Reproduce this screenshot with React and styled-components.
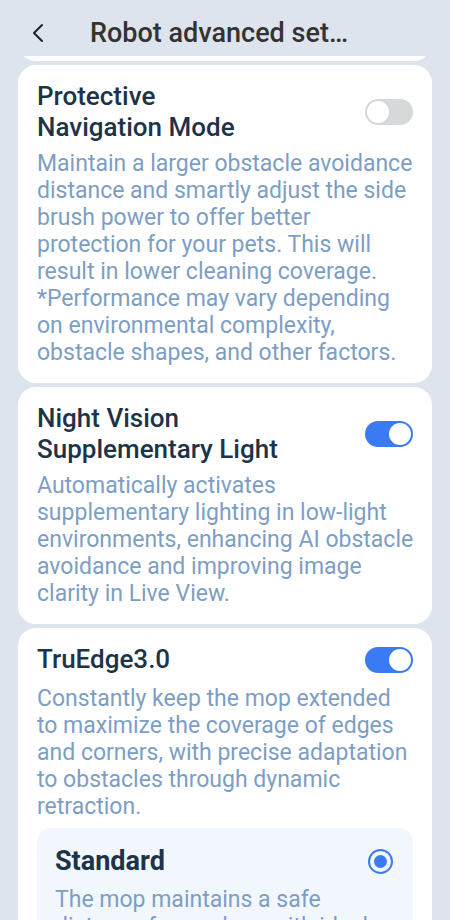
import React, { useState } from 'react';
import styled, { createGlobalStyle } from 'styled-components';

const GlobalStyle = createGlobalStyle`
  * { box-sizing: border-box; }
  html, body {
    margin: 0;
    padding: 0;
    background: #dde4ee;
    font-family: Roboto, "Noto Sans", "Liberation Sans", sans-serif;
    -webkit-font-smoothing: antialiased;
  }
`;

const Screen = styled.div`
  width: 450px;
  height: 920px;
  overflow: hidden;
  background: #dde4ee;
  display: flex;
  flex-direction: column;
`;

const Header = styled.div`
  height: 56px;
  display: flex;
  align-items: center;
  padding: 9px 0 0 28px;
  flex-shrink: 0;
`;

const BackButton = styled.button`
  width: 20px;
  height: 24px;
  border: none;
  background: none;
  padding: 0;
  display: flex;
  align-items: center;
  justify-content: center;
  margin-right: 42px;
  color: #222;
`;

const HeaderTitle = styled.h1`
  margin: 0;
  font-size: 27px;
  font-weight: 500;
  color: #333;
  width: 260px;
  white-space: nowrap;
  overflow: hidden;
  text-overflow: ellipsis;
`;

const List = styled.div`
  display: flex;
  flex-direction: column;
  gap: 4px;
  padding: 0 18px;
`;

const Stub = styled.div`
  height: 5px;
  overflow: hidden;
  display: flex;
  align-items: flex-end;
  & > div {
    flex: 1;
    height: 20px;
    background: #fff;
    border-radius: 0 0 18px 18px;
  }
`;

const Card = styled.div`
  background: #fff;
  border-radius: 18px;
  padding: 16px 19px 17px 19px;
`;

const Row = styled.div`
  display: flex;
  align-items: center;
  justify-content: space-between;
`;

const Title = styled.div`
  font-size: 26px;
  font-weight: 500;
  line-height: 31px;
  color: #1d3448;
`;

const Desc = styled.p`
  margin: ${p => p.$top || 7}px -2px 0 0;
  font-size: 23px;
  line-height: 27px;
  color: #7d9ec4;
`;

const Track = styled.button`
  position: relative;
  width: 48px;
  height: 26px;
  border-radius: 13px;
  border: none;
  padding: 0;
  flex-shrink: 0;
  background: ${p => (p.$on ? '#3a7af2' : '#d7d8da')};
  cursor: pointer;
`;

const Knob = styled.span`
  position: absolute;
  top: 2px;
  left: ${p => (p.$on ? '24px' : '2px')};
  width: 22px;
  height: 22px;
  border-radius: 50%;
  background: #fff;
`;

const Option = styled.div`
  margin-top: 8px;
  background: #f2f7fd;
  border-radius: 14px;
  padding: 18px 20px 20px 18px;
`;

const OptionTitle = styled.div`
  font-size: 27px;
  font-weight: 700;
  line-height: 31px;
  color: #1d3448;
`;

const Radio = styled.span`
  width: 25px;
  height: 25px;
  border-radius: 50%;
  border: 2px solid #3a7af2;
  display: flex;
  align-items: center;
  justify-content: center;
  &::after {
    content: '';
    width: 13px;
    height: 13px;
    border-radius: 50%;
    background: #3a7af2;
  }
`;

const Toggle = ({ on, onClick }) => (
  <Track $on={on} onClick={onClick}>
    <Knob $on={on} />
  </Track>
);

const App = () => {
  const [prot, setProt] = useState(false);
  const [night, setNight] = useState(true);
  const [edge, setEdge] = useState(true);

  return (
    <Screen>
      <GlobalStyle />
      <Header>
        <BackButton>
          <svg width="12" height="20" viewBox="0 0 12 20" fill="none">
            <path d="M10 2 L2 10 L10 18" stroke="currentColor" strokeWidth="2" strokeLinecap="round" strokeLinejoin="round" />
          </svg>
        </BackButton>
        <HeaderTitle>Robot advanced settings</HeaderTitle>
      </Header>
      <List>
        <Stub><div /></Stub>
        <Card>
          <Row>
            <Title>Protective<br />Navigation Mode</Title>
            <Toggle on={prot} onClick={() => setProt(!prot)} />
          </Row>
          <Desc>
            Maintain a larger obstacle avoidance distance and smartly adjust the side brush power to offer better protection for your pets. This will result in lower cleaning coverage. *Performance may vary depending on environmental complexity, obstacle shapes, and other factors.
          </Desc>
        </Card>
        <Card>
          <Row>
            <Title>Night Vision<br />Supplementary Light</Title>
            <Toggle on={night} onClick={() => setNight(!night)} />
          </Row>
          <Desc>
            Automatically activates supplementary lighting in low-light environments, enhancing AI obstacle avoidance and improving image clarity in Live View.
          </Desc>
        </Card>
        <Card>
          <Row>
            <Title>TruEdge3.0</Title>
            <Toggle on={edge} onClick={() => setEdge(!edge)} />
          </Row>
          <Desc $top={10}>
            Constantly keep the mop extended to maximize the coverage of edges and corners, with precise adaptation to obstacles through dynamic retraction.
          </Desc>
          <Option>
            <Row>
              <OptionTitle>Standard</OptionTitle>
              <Radio />
            </Row>
            <Desc $top={9}>
              The mop maintains a safe distance from edges with ideal force.
            </Desc>
          </Option>
        </Card>
      </List>
    </Screen>
  );
};

export default App;
